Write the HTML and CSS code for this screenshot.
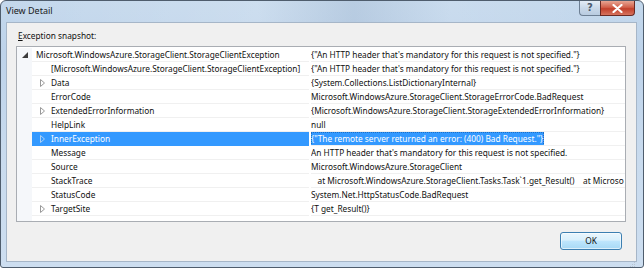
FILE: index.html
```html
<!DOCTYPE html>
<html>
<head>
<meta charset="utf-8">
<link rel="stylesheet" href="styles.css">
</head>
<body>
<div class="window">
  <div class="titlebar">
    <span class="title">View Detail</span>
    <div class="caption">
      <div class="cbtn help">?</div>
      <div class="cbtn close">
        <svg width="11" height="9" viewBox="0 0 11 9"><path d="M1.5 1 L9.5 8 M9.5 1 L1.5 8" stroke="#fff" stroke-width="2.2" stroke-linecap="round"/></svg>
      </div>
    </div>
  </div>
  <div class="client">
    <div class="label"><u>E</u>xception snapshot:</div>
    <div class="listbox">
      <div class="row">
        <div class="gutter"><svg class="exp-open" width="6" height="6" viewBox="0 0 6 6"><path d="M6 0 L6 6 L0 6 Z" fill="#3c3c3c"/></svg></div>
        <div class="name lvl0">Microsoft.WindowsAzure.StorageClient.StorageClientException</div>
        <div class="value">{"An HTTP header that's mandatory for this request is not specified."}</div>
      </div>
      <div class="row">
        <div class="gutter"></div>
        <div class="name lvl1">[Microsoft.WindowsAzure.StorageClient.StorageClientException]</div>
        <div class="value">{"An HTTP header that's mandatory for this request is not specified."}</div>
      </div>
      <div class="row">
        <div class="gutter"></div>
        <div class="name lvl1"><svg class="exp" width="5" height="8" viewBox="0 0 5 8"><path d="M0.5 0.5 L4.5 4 L0.5 7.5 Z" fill="none" stroke="#999" stroke-width="1"/></svg>Data</div>
        <div class="value">{System.Collections.ListDictionaryInternal}</div>
      </div>
      <div class="row">
        <div class="gutter"></div>
        <div class="name lvl1">ErrorCode</div>
        <div class="value">Microsoft.WindowsAzure.StorageClient.StorageErrorCode.BadRequest</div>
      </div>
      <div class="row">
        <div class="gutter"></div>
        <div class="name lvl1"><svg class="exp" width="5" height="8" viewBox="0 0 5 8"><path d="M0.5 0.5 L4.5 4 L0.5 7.5 Z" fill="none" stroke="#999" stroke-width="1"/></svg>ExtendedErrorInformation</div>
        <div class="value">{Microsoft.WindowsAzure.StorageClient.StorageExtendedErrorInformation}</div>
      </div>
      <div class="row">
        <div class="gutter"></div>
        <div class="name lvl1">HelpLink</div>
        <div class="value">null</div>
      </div>
      <div class="row selected">
        <div class="gutter"></div>
        <div class="name lvl1"><svg class="exp" width="5" height="8" viewBox="0 0 5 8"><path d="M0.5 0.5 L4.5 4 L0.5 7.5 Z" fill="none" stroke="#a9cff5" stroke-width="1"/></svg>InnerException</div>
        <div class="value"><span class="sel">{"The remote server returned an error: (400) Bad Request."}</span></div>
      </div>
      <div class="row">
        <div class="gutter"></div>
        <div class="name lvl1">Message</div>
        <div class="value">An HTTP header that's mandatory for this request is not specified.</div>
      </div>
      <div class="row">
        <div class="gutter"></div>
        <div class="name lvl1">Source</div>
        <div class="value">Microsoft.WindowsAzure.StorageClient</div>
      </div>
      <div class="row">
        <div class="gutter"></div>
        <div class="name lvl1">StackTrace</div>
        <div class="value">   at Microsoft.WindowsAzure.StorageClient.Tasks.Task`1.get_Result()    at Microso</div>
      </div>
      <div class="row">
        <div class="gutter"></div>
        <div class="name lvl1">StatusCode</div>
        <div class="value">System.Net.HttpStatusCode.BadRequest</div>
      </div>
      <div class="row">
        <div class="gutter"></div>
        <div class="name lvl1"><svg class="exp" width="5" height="8" viewBox="0 0 5 8"><path d="M0.5 0.5 L4.5 4 L0.5 7.5 Z" fill="none" stroke="#999" stroke-width="1"/></svg>TargetSite</div>
        <div class="value">{T get_Result()}</div>
      </div>
      <div class="filler"><div class="gutter"></div></div>
    </div>
    <div class="footer">
      <div class="okbtn">OK</div>
    </div>
  </div>
  <div class="grip">
    <svg width="8" height="8" viewBox="0 0 8 8"><g fill="#b8c4d0"><rect x="6" y="0" width="1" height="1"/><rect x="4" y="2" width="1" height="1"/><rect x="6" y="2" width="1" height="1"/><rect x="2" y="4" width="1" height="1"/><rect x="4" y="4" width="1" height="1"/><rect x="6" y="4" width="1" height="1"/></g></svg>
  </div>
</div>
</body>
</html>
```

FILE: styles.css
```css
html, body {
  margin: 0;
  padding: 0;
  background: #ffffff;
}
body {
  width: 644px;
  height: 270px;
  overflow: hidden;
  font-family: "Noto Sans", "Open Sans", sans-serif;
}
.window {
  position: relative;
  box-sizing: border-box;
  width: 644px;
  height: 268px;
  border: 1px solid #4f5d6d;
  border-radius: 6px 6px 3px 3px;
  background: linear-gradient(180deg, #c4d8ec 0%, #bed3ea 20%, #c9dbee 60%, #cddef0 100%);
  display: flex;
  flex-direction: column;
}
.titlebar {
  height: 21px;
  display: flex;
  align-items: flex-start;
  background: linear-gradient(90deg, rgba(255,255,255,0.0) 0%, rgba(255,255,255,0.15) 40%, rgba(150,170,195,0.25) 55%, rgba(255,255,255,0.1) 70%, rgba(255,255,255,0) 100%);
}
.title {
  font-size: 9px;
  color: #1a1a1a;
  line-height: 12px;
  margin: 4px 0 0 5px;
}
.caption {
  margin-left: auto;
  margin-right: 8px;
  display: flex;
}
.cbtn {
  height: 15px;
  box-sizing: border-box;
  display: flex;
  align-items: center;
  justify-content: center;
}
.help {
  width: 21px;
  border: 1px solid #6d7f94;
  border-top: none;
  border-right: none;
  border-radius: 0 0 0 4px;
  background: linear-gradient(180deg, #e3ecf6 0%, #c9d8e9 50%, #b8cbe0 100%);
  color: #4a5a6e;
  font-size: 10px;
  font-weight: bold;
  line-height: 12px;
  font-family: "DejaVu Sans", sans-serif;
}
.close {
  width: 35px;
  border: 1px solid #6b2a23;
  border-top: none;
  border-radius: 0 0 4px 0;
  background: linear-gradient(180deg, #e8a593 0%, #d2614b 45%, #c2402b 55%, #d6735e 100%);
}
.client {
  box-sizing: border-box;
  margin: 0 6px 0 5px;
  height: 240px;
  border: 1px solid #a6b6c8;
  background: #f0f0f0;
  display: flex;
  flex-direction: column;
}
.label {
  font-size: 8.3px;
  line-height: 12px;
  color: #111;
  margin: 7px 0 0 11px;
}
.listbox {
  box-sizing: border-box;
  width: 610px;
  height: 176px;
  margin: 4px 0 0 9px;
  border: 1px solid #a9adb3;
  background: #ffffff;
  padding-top: 1px;
  overflow: hidden;
  display: flex;
  flex-direction: column;
}
.row {
  display: flex;
  height: 14px;
  flex: none;
  font-size: 8.3px;
  line-height: 13px;
  color: #111;
}
.gutter {
  width: 15px;
  flex: none;
  background: #f5f7fa;
  display: flex;
  align-items: center;
  justify-content: center;
}
.name {
  box-sizing: border-box;
  width: 277px;
  flex: none;
  border-bottom: 1px solid #f0f0f0;
  white-space: nowrap;
  display: flex;
  align-items: center;
}
.lvl0 { padding-left: 4px; }
.lvl1 { padding-left: 19px; position: relative; }
.exp {
  position: absolute;
  left: 8px;
  top: 3px;
}
.value {
  box-sizing: border-box;
  flex: 1;
  margin-left: 2px;
  border-bottom: 1px solid #f0f0f0;
  white-space: pre;
  overflow: hidden;
}
.selected .name {
  background: #3399ff;
  color: #ffffff;
  border-bottom-color: #3399ff;
}
.sel {
  background: #3399ff;
  color: #ffffff;
  outline: 1px dotted #1d6fc4;
  outline-offset: -1px;
  padding: 0 1px 1px 0;
  display: inline-block;
  line-height: 13px;
}
.filler {
  flex: 1;
  display: flex;
}
.footer {
  display: flex;
  justify-content: flex-end;
  margin: 10px 14px 0 0;
}
.okbtn {
  box-sizing: border-box;
  width: 62px;
  height: 18px;
  border: 1px solid #3c7fb1;
  border-radius: 3px;
  background: linear-gradient(180deg, #eaf6fd 0%, #d9f0fc 45%, #bee6fd 50%, #a7d9f5 100%);
  box-shadow: inset 0 0 0 1px rgba(255,255,255,0.6);
  font-size: 8.3px;
  line-height: 16px;
  text-align: center;
  color: #111;
}
.grip {
  position: absolute;
  right: 7px;
  bottom: 6px;
  width: 8px;
  height: 8px;
}
```
